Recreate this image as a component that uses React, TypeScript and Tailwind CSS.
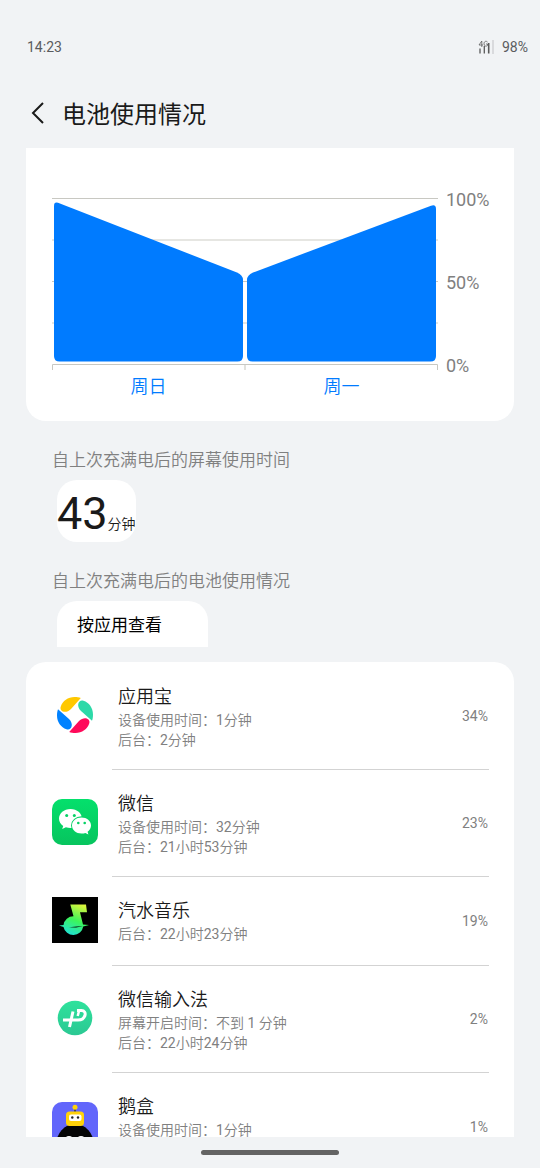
import type { ReactNode } from 'react'
import { clsx } from 'clsx'

type AppUsage = {
  name: string
  lines: string[]
  percent: number
  icon: ReactNode
}

const PETALS = [
  { color: '#ffc800', angle: 0 },
  { color: '#2dd9a8', angle: 90 },
  { color: '#ff0a5a', angle: 180 },
  { color: '#0082ff', angle: 270 },
]

function YingyongbaoIcon() {
  return (
    <svg viewBox="0 0 46 46" className="size-full">
      {PETALS.map(p => (
        <path
          key={p.color}
          d="M8.800 14.500C10.500 9 16 5 22.500 5C25 5 27 5.300 28.800 6L19 17C13.500 22.500 7 19 8.800 14.500Z"
          fill={p.color}
          transform={`rotate(${p.angle} 23 23)`}
        />
      ))}
    </svg>
  )
}

function WechatIcon() {
  return (
    <svg viewBox="0 0 46 46" className="size-full">
      <defs>
        <linearGradient id="wechat" x1="0" y1="0" x2="0" y2="1">
          <stop offset="0" stopColor="#04e06c" />
          <stop offset="1" stopColor="#07c45e" />
        </linearGradient>
      </defs>
      <rect width="46" height="46" rx="10" fill="url(#wechat)" />
      <path d="M18.500 10C12 10 7 14.400 7 19.600C7 22.600 8.600 25.200 11.200 27L10.200 30L13.900 28.200C15.400 28.800 17 29 18.500 29C25 29 30 24.900 30 19.600C30 14.400 25 10 18.500 10Z" fill="#fff" />
      <ellipse cx="29.500" cy="26.500" rx="10.500" ry="9.200" fill="#06d165" />
      <path d="M29.500 18.500C24.200 18.500 20 22 20 26.500C20 31 24.200 34.500 29.500 34.500C30.900 34.500 32.200 34.300 33.400 33.900L36.400 35.400L35.600 32.700C37.700 31.200 39 29 39 26.500C39 22 34.800 18.500 29.500 18.500Z" fill="#fff" />
      <circle cx="14.700" cy="16.500" r="1.500" fill="#06d165" />
      <circle cx="22.300" cy="16.500" r="1.500" fill="#06d165" />
      <circle cx="26.300" cy="24" r="1.300" fill="#06d165" />
      <circle cx="32.700" cy="24" r="1.300" fill="#06d165" />
    </svg>
  )
}

function QishuiIcon() {
  return (
    <svg viewBox="0 0 46 46" className="size-full">
      <defs>
        <linearGradient id="qishui" x1="0.700" y1="0" x2="0.300" y2="1">
          <stop offset="0" stopColor="#d8f53c" />
          <stop offset="0.500" stopColor="#3cf55a" />
          <stop offset="1" stopColor="#1ee0dc" />
        </linearGradient>
      </defs>
      <rect width="46" height="46" fill="#000" />
      <path
        d="M18.300 7.500H34L35 15.300H28L31 27.500L37 28L31.200 29.500A10 10 0 0 1 11.500 30L7 28.500L11.500 28A10 10 0 0 1 21.500 19.200Z"
        fill="url(#qishui)"
      />
      <path d="M17 30.300L25 29.500L31 29.300L24 30.600Z" fill="#000" />
    </svg>
  )
}

function WechatInputIcon() {
  return (
    <svg viewBox="0 0 46 46" className="size-full">
      <defs>
        <linearGradient id="wxinput" x1="0" y1="0" x2="0" y2="1">
          <stop offset="0" stopColor="#2fe29c" />
          <stop offset="1" stopColor="#2bc893" />
        </linearGradient>
      </defs>
      <circle cx="23" cy="23" r="17.300" fill="url(#wxinput)" />
      <g fill="none" stroke="#fff" strokeWidth="3">
        <path d="M11 25H26C34 25 35.500 15.500 29.500 15.500H25" />
        <path d="M21 16.500L17.500 32" />
        <path d="M27.300 15L25.700 21" strokeWidth="2.500" />
      </g>
    </svg>
  )
}

function GooseBoxIcon() {
  return (
    <svg viewBox="0 0 46 46" className="size-full">
      <rect width="46" height="46" rx="10" fill="#6266fb" />
      <ellipse cx="23" cy="43" rx="19" ry="21" fill="#050505" />
      <path d="M23 5V10" stroke="#333" strokeWidth="1.500" />
      <circle cx="23" cy="5.300" r="2.500" fill="#ffd20a" />
      <rect x="14" y="9.500" width="18" height="14.500" rx="3.500" fill="#ffd20a" />
      <rect x="17" y="12.500" width="12.500" height="6.500" rx="2" fill="#fff" />
      <circle cx="20.300" cy="15.500" r="1.200" fill="#222" />
      <circle cx="26" cy="15.500" r="1.200" fill="#222" />
      <ellipse cx="17" cy="38" rx="4" ry="4" fill="#fff" />
      <ellipse cx="29" cy="38" rx="4" ry="4" fill="#fff" />
    </svg>
  )
}

const APPS: AppUsage[] = [
  { name: '应用宝', lines: ['设备使用时间：1分钟', '后台：2分钟'], percent: 34, icon: <YingyongbaoIcon /> },
  { name: '微信', lines: ['设备使用时间：32分钟', '后台：21小时53分钟'], percent: 23, icon: <WechatIcon /> },
  { name: '汽水音乐', lines: ['后台：22小时23分钟'], percent: 19, icon: <QishuiIcon /> },
  { name: '微信输入法', lines: ['屏幕开启时间：不到 1 分钟', '后台：22小时24分钟'], percent: 2, icon: <WechatInputIcon /> },
  { name: '鹅盒', lines: ['设备使用时间：1分钟'], percent: 1, icon: <GooseBoxIcon /> },
]

const DAYS = ['周日', '周一']

function StatusBar() {
  return (
    <div className="flex h-20 shrink-0 items-center justify-between pt-3.5 pr-3 pl-[27px] text-sm text-[#5a5c5e]">
      <span>14:23</span>
      <div className="flex items-center gap-2">
        <svg viewBox="0 0 16 16" className="size-4">
          <g stroke="#5a5a5a" fill="none">
            <path d="M2 9.500V14.500M6.300 7V14.500" strokeWidth="1.300" />
            <path d="M10.700 4V14.500" strokeWidth="1.600" />
            <path d="M3.800 8V2L1 6H5" strokeWidth="0.800" />
            <path d="M9.500 3C8 1.500 6 2.500 6 4.800C6 7 8 7.800 9.500 6.500V5H8" strokeWidth="0.800" />
          </g>
          <path d="M15 1V15" stroke="#d0d2d4" strokeWidth="1.500" />
        </svg>
        <span>98%</span>
      </div>
    </div>
  )
}

function BatteryChart() {
  return (
    <section className="flex gap-2 rounded-b-[20px] bg-white pt-10 pr-6 pb-[22px] pl-[26px]">
      <div className="min-w-0 flex-1 pt-2.5">
        <svg viewBox="0 0 386 173" className="block w-full">
          <g fill="none">
            <path d="M0 0.500H386M0 83.500H386" stroke="#c8c8c2" />
            <path d="M0 42H386M0 125H386" stroke="#e6e6e2" strokeWidth="2" />
            <path d="M0.500 172V166.500H385.500V172" stroke="#c8c8c2" />
            <path d="M193 167V172" stroke="#e2e2de" strokeWidth="2" />
          </g>
          <path d="M2 8Q2 3.500 6 4.800L185 74.500Q191 77 191 82V158Q191 163.500 185.500 163.500H7.500Q2 163.500 2 158Z" fill="#007bff" />
          <path d="M195 82Q195 77 201 74.500L379 7.800Q384 6 384 11V158Q384 163.500 378.500 163.500H200.500Q195 163.500 195 158Z" fill="#007bff" />
        </svg>
        <div className="mt-1 grid grid-cols-2 text-center text-lg leading-6 text-[#007bff]">
          {DAYS.map(day => <span key={day}>{day}</span>)}
        </div>
      </div>
      <div className="flex h-[190px] w-11 flex-col justify-between text-lg leading-6 text-[#808080]">
        <span>100%</span>
        <span>50%</span>
        <span>0%</span>
      </div>
    </section>
  )
}

function AppRow({ app, last }: { app: AppUsage; last: boolean }) {
  return (
    <li className="flex">
      <div className="flex w-[60px] shrink-0 items-center pb-1">
        <div className="size-[46px]">{app.icon}</div>
      </div>
      <div
        className={clsx(
          'flex flex-1 items-center justify-between pt-[21px] pb-[19px] pl-1.5',
          last ? 'min-h-[107px]' : 'min-h-[89px] border-b border-[#d3d3d3]'
        )}
      >
        <div className="self-start">
          <h3 className="text-lg leading-[26px] text-[#1a1a1a]">{app.name}</h3>
          {app.lines.map(line => (
            <p key={line} className="text-sm leading-5 text-[#808080]">{line}</p>
          ))}
        </div>
        <span className="pr-px pb-0.5 text-sm text-[#808080]">{app.percent}%</span>
      </div>
    </li>
  )
}

export default function App() {
  return (
    <div className="flex h-screen flex-col overflow-hidden bg-[#f1f3f5] font-[Roboto,'Noto_Sans_CJK_SC_DemiLight','Noto_Sans_CJK_SC',sans-serif]">
      <StatusBar />

      <header className="flex h-[68px] shrink-0 items-center gap-3 pl-[26px]">
        <button type="button" aria-label="返回" className="size-6">
          <svg viewBox="0 0 24 24" className="size-full" fill="none" stroke="#1a1a1a" strokeWidth="2">
            <path d="M17 1L7 11L17 21" />
          </svg>
        </button>
        <h1 className="pt-0.5 font-[Roboto,'Noto_Sans_CJK_SC',sans-serif] text-2xl text-[#1a1a1a]">电池使用情况</h1>
      </header>

      <main className="min-h-0 flex-1 overflow-hidden px-[26px]">
        <BatteryChart />

        <section className="mt-[27px] px-[26px]">
          <h2 className="text-[17px] leading-6 text-[#808080]">自上次充满电后的屏幕使用时间</h2>
          <div className="mt-2 ml-[5px] flex h-[62px] w-fit items-baseline rounded-[20px] bg-white text-[#1a1a1a]">
            <span className="text-[45px] leading-[68px]">43</span>
            <span className="text-sm">分钟</span>
          </div>
        </section>

        <section className="mt-[27px]">
          <h2 className="px-[26px] text-[17px] leading-6 text-[#808080]">自上次充满电后的电池使用情况</h2>
          <button type="button" className="mt-2 ml-[31px] flex h-[46px] w-[151px] items-center rounded-t-[20px] bg-white px-5 pt-1 font-[Roboto,'Noto_Sans_CJK_SC',sans-serif] text-[17px] text-black">
            按应用查看
          </button>
          <ul className="mt-[15px] rounded-t-[20px] bg-white pt-px pr-[25px] pl-[26px]">
            {APPS.map((app, i) => <AppRow key={app.name} app={app} last={i === APPS.length - 1} />)}
          </ul>
        </section>
      </main>

      <footer className="flex h-[31px] shrink-0 items-center justify-center">
        <div className="h-[5px] w-[138px] rounded-full bg-[#636363]" />
      </footer>
    </div>
  )
}
